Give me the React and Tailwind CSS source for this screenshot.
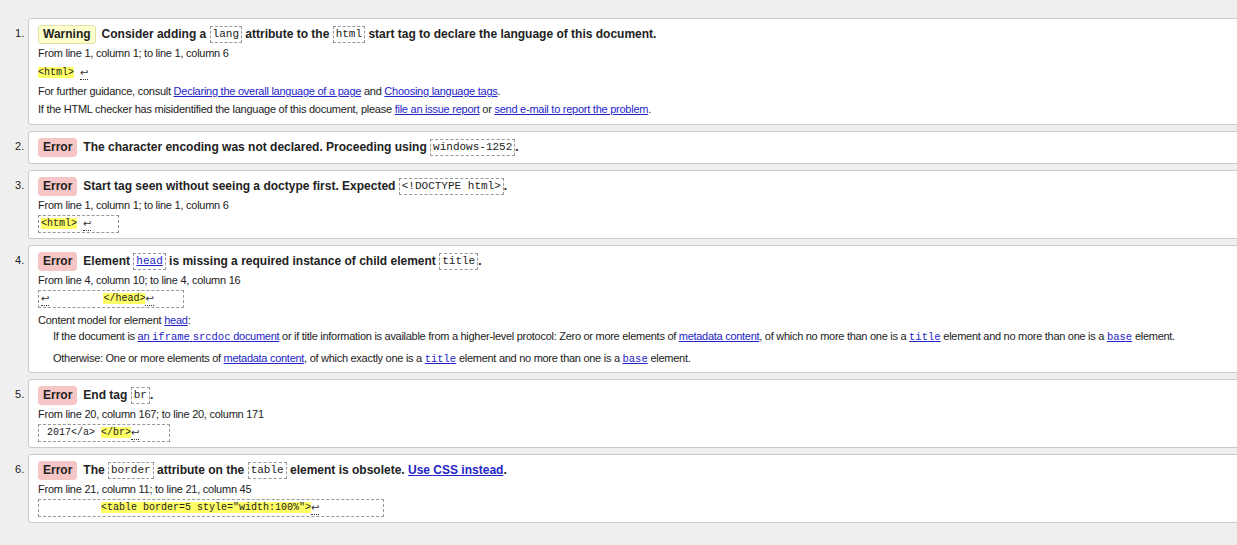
import React from "react";

const MONO = "font-['Liberation_Mono','DejaVu_Sans_Mono',monospace]";

function C({ children, link }) {
  return (
    <code
      className={`inline-block border border-dashed border-[#999] px-[2px] text-[11px] leading-[15px] font-normal align-[1px] ${MONO} ${
        link ? "text-[#2424c8] underline" : "text-[#222]"
      }`}
    >
      {children}
    </code>
  );
}

function Hl({ children }) {
  return <span className="bg-[#ffff66]">{children}</span>;
}

function Ret() {
  return (
    <span className="inline-block h-[14px] border-b border-dotted border-[#333] font-['DejaVu_Sans',sans-serif] text-[10px] leading-[13px] text-[#333] align-top">
      ↩
    </span>
  );
}

function A({ children, bold }) {
  return (
    <a className={`text-[#2424c8] underline ${bold ? "font-bold" : ""}`}>
      {children}
    </a>
  );
}

function Badge({ kind }) {
  const warn = kind === "Warning";
  return (
    <span
      className={`inline-block rounded-[3px] px-[4px] mr-[6px] leading-[17px] ${
        warn
          ? "bg-[#ffffcc] border border-[#e2e2a8]"
          : "bg-[#f6c6c6] border border-[#f6c6c6]"
      }`}
    >
      {kind}
    </span>
  );
}

function Heading({ kind, children }) {
  return (
    <div className="h-[20px] text-[12px] font-bold leading-[20px] text-[#222] whitespace-nowrap">
      <Badge kind={kind} />
      {children}
    </div>
  );
}

function Loc({ children, h = 19 }) {
  return (
    <div
      className="text-[11px] tracking-[-0.25px] text-[#222] whitespace-nowrap"
      style={{ height: h, lineHeight: `${h}px` }}
    >
      {children}
    </div>
  );
}

function Extract({ w, children }) {
  return (
    <div className="flex h-[18px]">
      <div
        className={`flex h-[18px] items-center border border-dashed border-[#999] pl-[2px] text-[10px] leading-[14px] text-[#222] ${MONO}`}
        style={{ width: w }}
      >
        <span className="whitespace-pre">{children}</span>
      </div>
    </div>
  );
}

function Item({ n, children, pb = 5 }) {
  return (
    <li className="flex">
      <div className="w-[28px] flex-none pl-[15px] pt-[8px] text-[11px] leading-[14px] text-[#222]">
        {n}.
      </div>
      <div
        className="w-[1215px] flex-none rounded-[3px] border border-[#cacaca] bg-white pl-[9px] pt-[5px]"
        style={{ paddingBottom: pb }}
      >
        {children}
      </div>
    </li>
  );
}

const M = ({ children }) => (
  <span className={`text-[10.5px] tracking-normal ${MONO}`}>{children}</span>
);

export default function App() {
  return (
    <div className="min-h-[545px] overflow-hidden bg-[#efefef] pt-[18px] font-['Liberation_Sans',Arial,sans-serif]">
      <ol className="flex flex-col gap-[6px]">
        <Item n={1} pb={6}>
          <Heading kind="Warning">
            Consider adding a <C>lang</C> attribute to the <C>html</C> start
            tag to declare the language of this document.
          </Heading>
          <Loc>From line 1, column 1; to line 1, column 6</Loc>
          <div className="flex h-[19px] items-center">
            <div className={`text-[10px] leading-[14px] text-[#222] ${MONO}`}>
              <span className="whitespace-pre">
                <Hl>{"<html>"}</Hl>
                {" "}
                <Ret />
              </span>
            </div>
          </div>
          <Loc h={18}>
            For further guidance, consult{" "}
            <A>Declaring the overall language of a page</A> and{" "}
            <A>Choosing language tags</A>.
          </Loc>
          <Loc h={18}>
            If the HTML checker has misidentified the language of this
            document, please <A>file an issue report</A> or{" "}
            <A>send e-mail to report the problem</A>.
          </Loc>
        </Item>

        <Item n={2} pb={6}>
          <Heading kind="Error">
            The character encoding was not declared. Proceeding using{" "}
            <C>windows-1252</C>.
          </Heading>
        </Item>

        <Item n={3}>
          <Heading kind="Error">
            Start tag seen without seeing a doctype first. Expected{" "}
            <C>{"<!DOCTYPE html>"}</C>.
          </Heading>
          <Loc>From line 1, column 1; to line 1, column 6</Loc>
          <Extract w="81px">
            <Hl>{"<html>"}</Hl>
            {" "}
            <Ret />
          </Extract>
        </Item>

        <Item n={4}>
          <Heading kind="Error">
            Element <C link>head</C> is missing a required instance of child
            element <C>title</C>.
          </Heading>
          <Loc>From line 4, column 10; to line 4, column 16</Loc>
          <Extract w="146px">
            <Ret />
            {"         "}
            <Hl>{"</head>"}</Hl>
            <Ret />
          </Extract>
          <div className="mt-[4px] h-[16px] text-[11px] tracking-[-0.25px] leading-[16px] text-[#222]">
            Content model for element <A>head</A>:
          </div>
          <div className="pl-[15px] text-[11px] tracking-[-0.28px] leading-[16px] text-[#222] whitespace-nowrap">
            <div>
              If the document is{" "}
              <A>
                an <M>iframe</M> <M>srcdoc</M> document
              </A>{" "}
              or if title information is available from a higher-level
              protocol: Zero or more elements of <A>metadata content</A>, of
              which no more than one is a{" "}
              <A>
                <M>title</M>
              </A>{" "}
              element and no more than one is a{" "}
              <A>
                <M>base</M>
              </A>{" "}
              element.
            </div>
            <div className="mt-[5px]">
              Otherwise: One or more elements of <A>metadata content</A>, of
              which exactly one is a{" "}
              <A>
                <M>title</M>
              </A>{" "}
              element and no more than one is a{" "}
              <A>
                <M>base</M>
              </A>{" "}
              element.
            </div>
          </div>
        </Item>

        <Item n={5}>
          <Heading kind="Error">
            End tag <C>br</C>.
          </Heading>
          <Loc>From line 20, column 167; to line 20, column 171</Loc>
          <Extract w="132px">
            {" 2017</a> "}
            <Hl>{"</br>"}</Hl>
            <Ret />
          </Extract>
        </Item>

        <Item n={6}>
          <Heading kind="Error">
            The <C>border</C> attribute on the <C>table</C> element is
            obsolete. <A bold>Use CSS instead</A>.
          </Heading>
          <Loc>From line 21, column 11; to line 21, column 45</Loc>
          <Extract w="346px">
            {"          "}
            <Hl>{'<table border=5 style="width:100%">'}</Hl>
            <Ret />
          </Extract>
        </Item>
      </ol>
    </div>
  );
}
